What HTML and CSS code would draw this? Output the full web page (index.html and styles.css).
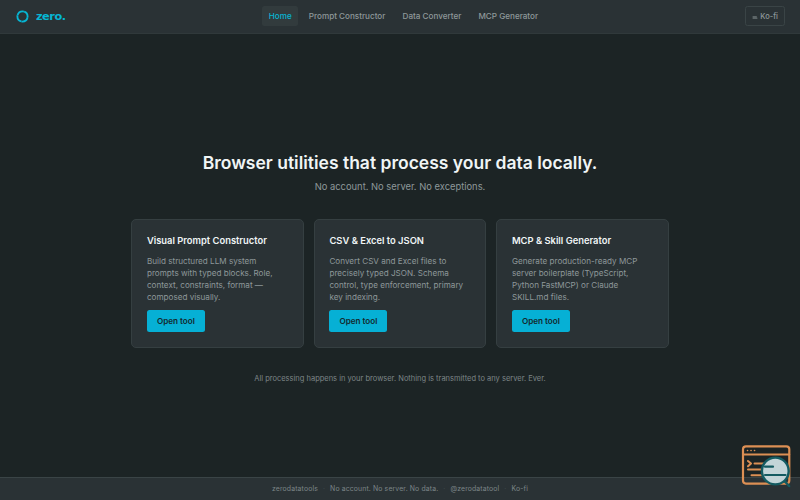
FILE: index.html
```html
<!DOCTYPE html>
<html lang="en">
<head>
<meta charset="utf-8">
<title>zero.</title>
<link rel="stylesheet" href="styles.css">
</head>
<body>
<header class="topbar">
  <a class="brand"><svg class="brand-mark" viewBox="0 0 24 24" fill="none" stroke="currentColor"><circle cx="12" cy="12" r="9.4" stroke-width="3.4" stroke-dasharray="14.3 .466" stroke-dashoffset="-2"/></svg><span>zero.</span></a>
  <nav class="nav">
    <a class="nav-link active">Home</a>
    <a class="nav-link">Prompt Constructor</a>
    <a class="nav-link">Data Converter</a>
    <a class="nav-link">MCP Generator</a>
  </nav>
  <a class="kofi"><svg class="cup" viewBox="0 0 10 5"><path d="M1 1h7v1H1zM1 2.8h8V4H1z" fill="currentColor"/></svg><span>Ko-fi</span></a>
</header>
<main class="main">
  <h1 class="title">Browser utilities that process your data locally.</h1>
  <p class="subtitle">No account. No server. No exceptions.</p>
  <section class="cards">
    <article class="card">
      <h2>Visual Prompt Constructor</h2>
      <p>Build structured LLM system prompts with typed blocks. Role, context, constraints, format — composed visually.</p>
      <a class="button">Open tool</a>
    </article>
    <article class="card">
      <h2>CSV &amp; Excel to JSON</h2>
      <p>Convert CSV and Excel files to precisely typed JSON. Schema control, type enforcement, primary key indexing.</p>
      <a class="button">Open tool</a>
    </article>
    <article class="card">
      <h2>MCP &amp; Skill Generator</h2>
      <p>Generate production-ready MCP server boilerplate (TypeScript, Python FastMCP) or Claude SKILL.md files.</p>
      <a class="button">Open tool</a>
    </article>
  </section>
  <p class="note">All processing happens in your browser. Nothing is transmitted to any server. Ever.</p>
</main>
<footer class="footer">
  <span>zerodatatools</span><i>·</i><span>No account. No server. No data.</span><i>·</i><span>@zerodatatool</span><i>·</i><span>Ko-fi</span>
</footer>
<svg class="badge" viewBox="0 0 50 44" fill="none" stroke-linecap="round" stroke-linejoin="round">
  <rect x="2" y="2.3" width="46.3" height="37.3" rx="3" stroke="#dc8f54" stroke-width="2.2"/>
  <path d="M2 10.5h46.3" stroke="#dc8f54" stroke-width="1.9"/>
  <path d="M6.5 6.5h.1M10 6.5h.1M13.5 6.5h.1" stroke="#dc8f54" stroke-width="1.6"/>
  <path d="M7 17l3 2.5L7 22.3M13.5 19.5h11M7 25.4h13M10.5 31.2h11" stroke="#dc8f54" stroke-width="2"/>
  <path d="M43.5 37l4.6 5" stroke="#145b61" stroke-width="2.5"/>
  <circle cx="34.3" cy="27" r="13.4" fill="#c3d5d8" stroke="#145b61" stroke-width="2.4"/>
  <path d="M24 22.7h8M24 31h20.5" stroke="#145b61" stroke-width="2.2"/>
</svg>
</body>
</html>
```

FILE: styles.css
```css
* { box-sizing: border-box; }
body {
  margin: 0;
  height: 100vh;
  display: flex;
  flex-direction: column;
  overflow: hidden;
  background: #1c2425;
  color: #f0f5f5;
  font-family: Inter, "Liberation Sans", sans-serif;
}
h1, h2, p { margin: 0; }
.topbar {
  height: 33.5px;
  flex: none;
  display: flex;
  justify-content: space-between;
  align-items: center;
  padding: 0 15px;
  background: #2a3235;
  border-bottom: 1px solid #30393b;
}
.brand {
  display: flex;
  align-items: center;
  gap: 7px;
  padding-left: 1px;
  color: #06b6d4;
  font: bold 11.25px "DejaVu Sans", sans-serif;
  letter-spacing: -.45px;
}
.brand-mark { width: 13px; height: 13px; }
.nav { display: flex; gap: 4px; margin-right: 4px; }
.nav-link {
  padding: 0 6.6px;
  height: 20px;
  line-height: 20px;
  border-radius: 2.5px;
  font-size: 8.125px;
  font-weight: 500;
  color: #8e989a;
}
.nav-link.active { background: #323b3d; color: #06b6d4; }
.kofi {
  display: flex;
  align-items: center;
  gap: 2px;
  height: 20px;
  padding: 0 6px;
  border: 1px solid #3a4446;
  border-radius: 2.5px;
  font-size: 7.5px;
  font-weight: 500;
  color: #8e989a;
}
.cup { width: 6px; height: 3px; margin-top: 3px; }
.main {
  flex: 1;
  display: flex;
  flex-direction: column;
  align-items: center;
  padding-top: 118px;
}
.title { font-size: 17.5px; line-height: 22px; font-weight: 600; }
.subtitle { margin-top: 5px; font-size: 9.375px; line-height: 15px; color: #8e989a; }
.cards {
  width: 537.5px;
  margin-top: 25.5px;
  display: grid;
  grid-template-columns: repeat(3, 1fr);
  gap: 10px;
}
.card {
  height: 129px;
  padding: 14px 14.7px;
  border: 1px solid #353f41;
  border-radius: 5px;
  background: #2a3235;
}
.card h2 { font-size: 9.4px; line-height: 13px; font-weight: 600; }
.card p { margin-top: 7.5px; font-size: 8.15px; line-height: 12.1px; color: #8e989a; }
.button {
  display: inline-flex;
  align-items: center;
  height: 22px;
  margin-top: 7px;
  padding: 0 10px;
  border-radius: 2.5px;
  background: #06b0d5;
  color: #14292e;
  font-size: 8.125px;
  font-weight: 600;
}
.note { margin-top: 24.5px; font-size: 7.5px; line-height: 12px; color: #7c8587; }
.footer {
  flex: none;
  height: 23.5px;
  display: flex;
  align-items: center;
  justify-content: center;
  gap: 5px;
  background: #2a3235;
  border-top: 1px solid #3a4446;
  color: #7c8587;
  font-size: 6.875px;
  letter-spacing: .02em;
}
.footer i { font-style: normal; color: #3f494b; }
.badge { position: absolute; left: 741px; top: 444px; width: 50px; height: 44px; }
```
